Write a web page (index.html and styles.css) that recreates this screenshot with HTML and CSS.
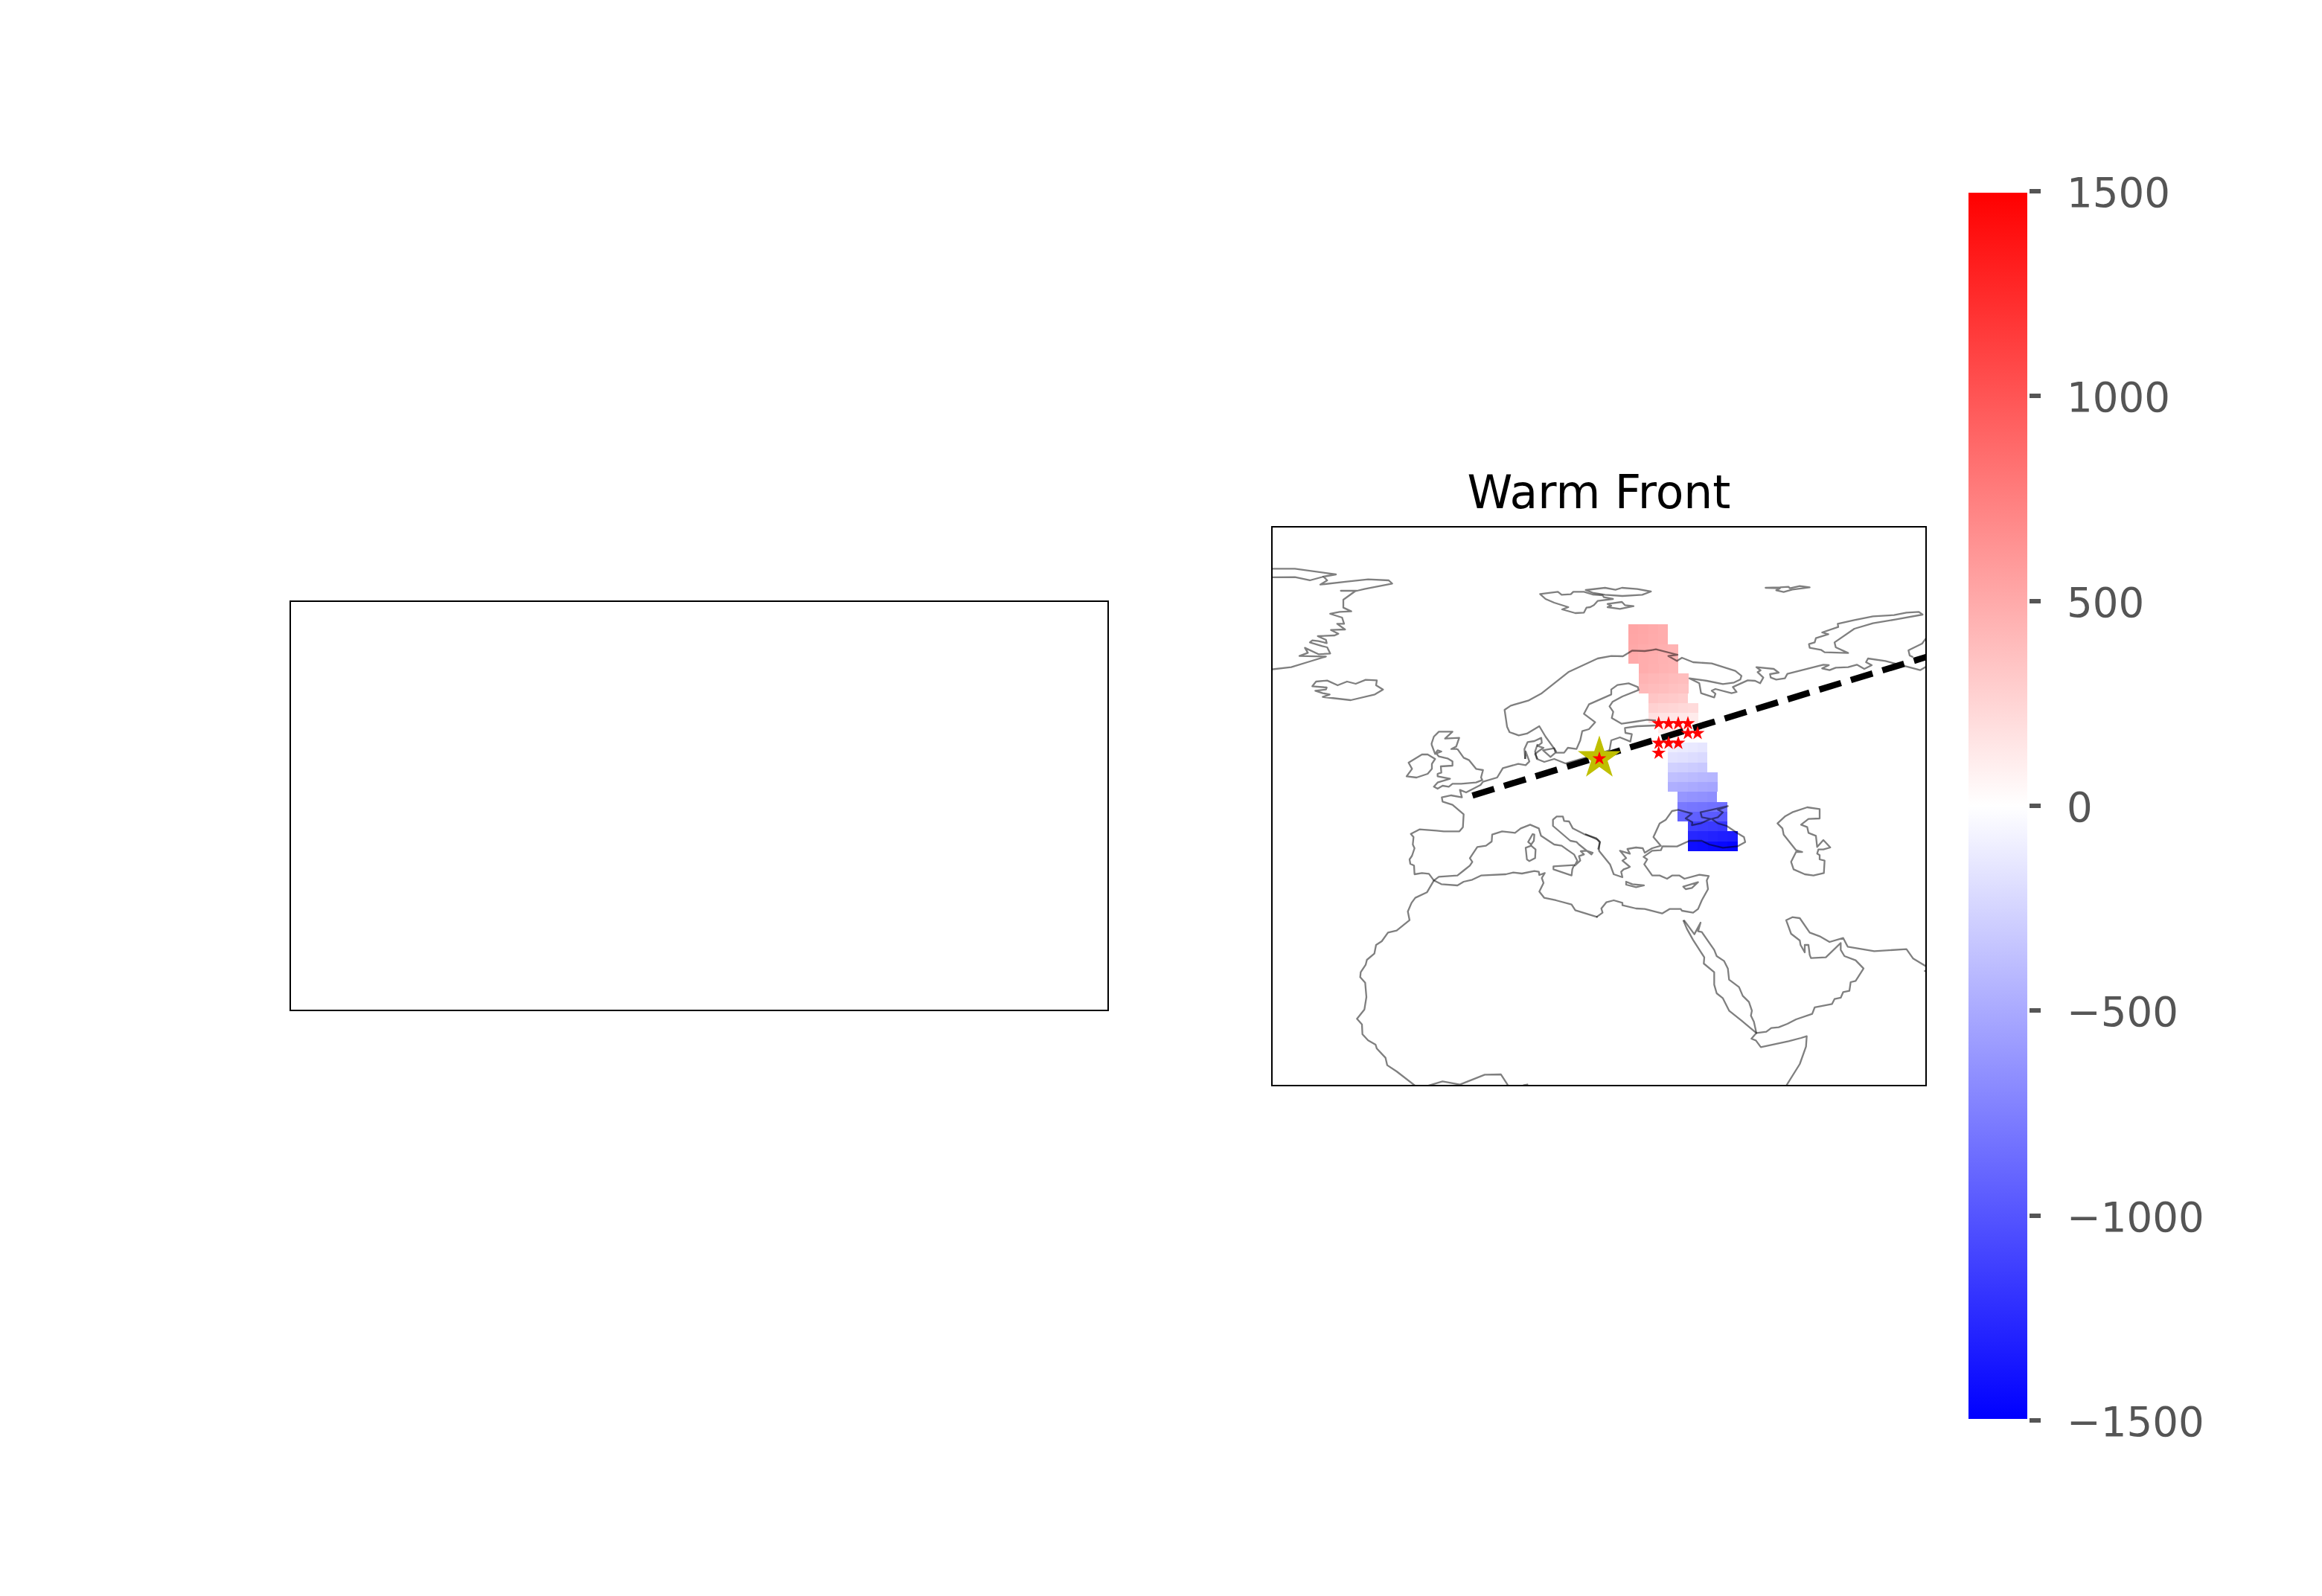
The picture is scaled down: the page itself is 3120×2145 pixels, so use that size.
FILE: index.html
```html
<!DOCTYPE html>
<html lang="en">
<head>
    <meta charset="UTF-8" />
    <title>Warm Front</title>
    <link rel="stylesheet" href="styles.css">
</head>
<body>

<div class="figure">
    <div class="empty-axes"></div>

    <div class="map-panel">
        <h2 class="map-title">Warm Front</h2>
        <div class="map-axes">
            <!-- viewBox is in page pixels, each coast group has its own scale -->
            <svg class="map" viewBox="1710 709 877 749" width="877" height="749">
                <defs>
                    <polygon id="star" points="0,-1 .2245,-.309 .951,-.309 .363,.118 .588,.809 0,.382 -.588,.809 -.363,.118 -.951,-.309 -.2245,-.309" />
                </defs>

                <g id="mesh"></g>

                <line class="front-line" x1="1978.5" y1="1069.2" x2="2590" y2="882.5" />

                <g transform="translate(1700 620) scale(.33333)">
                    <!-- greenland -->
                    <path class="coast" d="M0,433 L120,433 L285,456 L235,465 L250,480 L222,497 L330,485 L415,476 L498,480 L512,493 L400,515 L370,522 L305,522 L365,522 L315,558 L315,590 L347,605 L300,607 L262,615 L310,630 L318,655 L290,655 L322,678 L265,680 L295,695 L280,702 L212,705 L245,720 L248,733 L215,725 L190,722 L180,730 L230,745 L250,750 L262,775 L215,778 L160,752 L172,772 L138,785 L245,787 L170,810 L105,830 L0,842" />
                    <path class="coast" d="M0,468 L120,467 L180,480 L235,465" />
                    <!-- iceland -->
                    <path class="coast" d="M190,907 L205,888 L250,884 L292,903 L330,888 L365,897 L405,881 L450,883 L447,903 L475,920 L442,940 L345,963 L232,950 L260,940 L232,935 L202,925 L245,920 L248,912 Z" />
                    <!-- svalbard -->
                    <path class="coast" d="M1108,535 L1180,526 L1195,538 L1232,536 L1242,526 L1285,526 L1320,537 L1360,540 L1365,548 L1402,555 L1340,563 L1325,580 L1310,588 L1295,590 L1285,610 L1250,612 L1197,597 L1222,588 L1165,570 L1130,555 Z" />
                    <path class="coast" d="M1292,519 L1370,510 L1412,518 L1438,510 L1500,515 L1555,525 L1520,538 L1440,543 L1370,538 L1320,530 Z" />
                    <path class="coast" d="M1380,575 L1438,567 L1450,580 L1485,584 L1430,595 L1380,588 L1395,582 Z" />
                    <!-- scandinavia -->
                    <path class="coast" d="M1560,761 L1530,765 L1480,763 L1442,786 L1395,785 L1340,795 L1222,850 L1115,935 L1060,965 L990,985 L965,1002 L975,1070 L985,1092 L1022,1105 L1055,1098 L1105,1068 L1130,1110 L1170,1165 L1175,1175 L1205,1175 L1220,1155 L1255,1160 L1270,1125 L1278,1088 L1305,1080 L1330,1052 L1285,1018 L1305,980 L1395,940 L1395,920 L1420,902 L1465,895 L1502,910 L1505,922 L1440,948 L1400,970 L1388,988 L1403,1010 L1397,1035 L1437,1058 L1490,1050 L1540,1042 L1575,1045" />
                    <path class="coast" d="M1575,1065 L1500,1068 L1450,1075 L1452,1095 L1478,1100 L1472,1130 L1430,1113 L1395,1125 L1388,1165" />
                    <!-- denmark, scotland top -->
                    <path class="coast" d="M1048,1200 L1045,1160 L1058,1132 L1085,1128 L1113,1115 L1115,1135 L1098,1148 L1122,1155 L1100,1170 L1088,1180 L1098,1200" />
                    <path class="coast" d="M1120,1165 L1165,1157 L1170,1175 L1150,1192 Z" />
                    <path class="coast" d="M670,1140 L680,1110 L700,1090 L755,1090 L725,1118 L782,1115 L770,1150 L750,1160 L775,1160" />
                </g>

                <g transform="translate(2100 700) scale(.33333)">
                    <!-- russian arctic coast -->
                    <path class="coast" d="M360,521 L375,518 L462,540 L425,545 L460,565 L480,552 L525,570 L600,575 L695,605 L720,625 L715,640 L690,652 L645,658 L580,645 L510,635 L550,655 L557,695 L610,712 L615,697 L600,685 L615,678 L680,695 L700,690 L685,670 L745,643 L775,645 L795,655 L808,632 L785,610 L797,603 L780,590 L850,597 L870,612 L835,618 L838,632 L860,640 L895,635 L905,617 L1050,580 L1072,582 L1045,595 L1075,602 L1100,592 L1150,590 L1185,580 L1215,597 L1245,582 L1222,570 L1230,555 L1300,565 L1395,590 L1440,602 L1470,585" />
                    <path class="coast" d="M1470,465 L1448,495 L1393,522 L1398,543 L1412,550" />
                    <!-- novaya zemlya -->
                    <path class="coast" d="M1450,378 L1435,367 L1385,370 L1335,380 L1250,385 L1175,400 L1108,415 L1110,428 L1045,450 L1070,457 L1020,473 L1015,490 L992,497 L995,512 L1040,520 L1055,530 L1150,533 L1100,510 L1095,490 L1175,435 L1250,413 L1340,398 Z" />
                    <!-- franz josef land -->
                    <path class="coast" d="M817,270 L875,268 L910,266 L915,272 L955,263 L995,268 L925,277 L890,287 L860,280 L875,272 Z" />
                </g>

                <g transform="translate(1700 1000) scale(.33333)">
                    <!-- north sea, france, iberia, med north shore -->
                    <path class="coast" d="M1048,60 L1050,30 L1065,70 L1050,85 L1020,80 L958,97 L935,135 L878,152 L868,165 L810,195 L785,185 L793,215 L750,207 L712,215 L715,232 L755,245 L800,283 L797,335 L783,352 L720,352 L690,349 L622,344 L587,362 L598,375 L595,405 L602,420 L592,450 L582,465 L585,483 L600,490 L602,525 L632,520 L660,523 L680,550 L700,535 L775,530 L800,510 L825,490 L835,475 L825,460 L855,415 L890,410 L913,393 L915,365 L955,352 L1007,358 L1030,340 L1068,325 L1103,340 L1112,370 L1165,405 L1195,410 L1220,428 L1245,445 L1258,470 L1248,490 L1270,470 L1265,452 L1285,445 L1272,432 L1295,430 L1320,438 L1315,445 L1265,405 L1255,395 L1230,390 L1195,360 L1160,330 L1160,305 L1175,292 L1200,292 L1205,310 L1225,312 L1240,340 L1290,365 L1335,380 L1348,395 L1345,430" />
                    <path class="coast" d="M1098,0 L1088,30 L1095,60 L1125,72 L1165,60 L1210,78 L1290,55 L1388,25" />
                    <!-- britain, ireland -->
                    <path class="coast" d="M775,20 L800,55 L822,65 L850,100 L878,105 L870,135 L875,145 L850,155 L790,160 L755,160 L740,172 L715,168 L695,180 L680,172 L695,155 L745,140 L695,130 L695,120 L710,115 L708,90 L755,87 L755,70 L735,58 L700,50 L690,38 L710,30 L695,25 L685,40 L670,0" />
                    <path class="coast" d="M578,75 L632,42 L655,42 L685,60 L672,80 L672,100 L655,120 L610,135 L570,130 L592,100 Z" />
                    <!-- sicily, corsica, sardinia -->
                    <path class="coast" d="M1162,493 L1245,488 L1238,505 L1235,530 L1162,505 Z" />
                    <path class="coast" d="M1060,395 L1078,363 L1085,365 L1083,390 L1072,405 Z" />
                    <path class="coast" d="M1072,410 L1090,425 L1088,460 L1065,472 L1055,465 L1050,418 Z" />
                    <!-- africa -->
                    <path class="coast" d="M1340,698 L1250,670 L1235,647 L1172,630 L1125,620 L1105,595 L1122,560 L1115,540 L1127,520 L1105,528 L1103,515 L1085,512 L1035,522 L1000,518 L970,525 L870,530 L835,547 L800,555 L775,570 L710,565 L680,550 L652,598 L605,620 L590,640 L575,675 L582,710 L530,752 L495,760 L470,795 L447,810 L440,845 L410,870 L405,890 L385,920 L383,940 L403,962 L408,1020 L400,1070 L370,1108 L390,1130 L392,1170 L415,1195 L445,1212 L450,1228 L485,1265 L492,1295 L530,1320 L605,1378" />
                    <path class="coast" d="M655,1378 L715,1360 L785,1373 L885,1333 L950,1332 L980,1378" />
                    <path class="coast" d="M1040,1376 L1060,1372" />
                </g>

                <g transform="translate(2130 1060) scale(.33333)">
                    <!-- balkans, black sea, turkey, levant, libya -->
                    <path class="coast" d="M55,250 L100,305 L115,345 L150,357 L145,335 L155,325 L170,320 L180,315 L150,290 L165,280 L140,250 L180,262 L170,243 L205,237 L232,240 L240,258 L270,240 L305,230 L275,195 L300,140 L325,125 L350,90 L375,85 L430,100 L405,120 L432,135 L430,147 L465,140 L505,122 L470,115 L465,95 L510,85 L575,70 L535,85 L555,95 L535,115 L510,122 L535,140 L570,150 L615,180 L640,195 L645,215 L615,232 L555,238 L500,225 L470,210 L420,210 L370,233 L312,232 L305,248 L270,250 L235,275 L250,285 L238,305 L270,350 L300,350 L330,363 L350,350 L380,350 L400,363 L460,347 L498,352 L490,370 L495,405 L470,450 L455,485 L435,500 L390,492 L385,485 L340,485 L310,503 L240,485 L205,483 L150,470 L150,460 L115,450 L85,458 L65,483 L70,500 L45,518" />
                    <path class="coast" d="M0,183 L50,205 L60,215 L52,245" />
                    <!-- crete, cyprus -->
                    <path class="coast" d="M165,375 L190,385 L237,390 L205,397 L165,387 Z" />
                    <path class="coast" d="M395,395 L455,377 L430,400 L405,405 Z" />
                    <!-- caspian -->
                    <path class="coast" d="M775,140 L805,112 L835,95 L895,75 L945,82 L945,120 L900,122 L870,145 L895,155 L900,178 L930,190 L935,235 L960,207 L988,237 L960,245 L940,245 L935,262 L945,268 L945,285 L965,290 L962,340 L920,350 L885,345 L840,325 L830,295 L850,255 L875,255 L850,248 L800,185 L795,160 Z" />
                    <!-- red sea, arabia, iran coast -->
                    <path class="coast" d="M395,530 L410,565 L435,610 L480,680 L478,705 L520,740 L520,790 L530,825 L555,845 L580,895 L630,935 L690,985 L670,1008 L688,1015 L708,1042 L820,1018 L870,1005 L893,998 L890,1040 L865,1110 L812,1195" />
                    <path class="coast" d="M398,530 L440,587 L465,540 L455,575 L470,578 L520,650 L530,675 L560,695 L575,725 L580,770 L620,800 L635,835 L660,860 L672,895 L668,915 L680,940 L690,985 L730,980 L750,965 L780,962 L815,948 L850,930 L915,908 L925,882 L995,868 L1005,848 L1030,843 L1040,820 L1065,815 L1070,780 L1090,775 L1122,725 L1090,692 L1045,675 L1030,650 L1030,622 L970,680 L910,683 L905,670 L900,630 L885,630 L885,660 L868,630 L865,612 L830,585 L810,530 L835,518 L865,522 L905,580 L945,595 L985,618 L1040,602 L1058,637 L1165,655 L1295,647 L1322,685 L1375,717" />
                    <path class="coast" d="M1366,735 L1375,735" />
                </g>

                <use href="#star" class="star-big" transform="translate(2149 1019) scale(30.5)" />
                <use href="#star" class="star-small" transform="translate(2149 1019.5) scale(9.8)" />

                <use href="#star" class="star-small" transform="translate(2228.7 972.3) scale(10)" />
                <use href="#star" class="star-small" transform="translate(2242 972.3) scale(10)" />
                <use href="#star" class="star-small" transform="translate(2255 972.3) scale(10)" />
                <use href="#star" class="star-small" transform="translate(2268 972.3) scale(10)" />
                <use href="#star" class="star-small" transform="translate(2268 985.5) scale(10)" />
                <use href="#star" class="star-small" transform="translate(2281 985.5) scale(10)" />
                <use href="#star" class="star-small" transform="translate(2228.7 998.7) scale(10)" />
                <use href="#star" class="star-small" transform="translate(2242 998.7) scale(10)" />
                <use href="#star" class="star-small" transform="translate(2255 998.7) scale(10)" />
                <use href="#star" class="star-small" transform="translate(2228.7 1012) scale(10)" />
            </svg>
        </div>
    </div>

    <div class="colorbar">
        <div class="colorbar-ramp"></div>
        <div class="colorbar-ticks">
            <div class="tick"><span class="tick-mark"></span><span class="tick-label">1500</span></div>
            <div class="tick"><span class="tick-mark"></span><span class="tick-label">1000</span></div>
            <div class="tick"><span class="tick-mark"></span><span class="tick-label">500</span></div>
            <div class="tick"><span class="tick-mark"></span><span class="tick-label">0</span></div>
            <div class="tick"><span class="tick-mark"></span><span class="tick-label">−500</span></div>
            <div class="tick"><span class="tick-mark"></span><span class="tick-label">−1000</span></div>
            <div class="tick"><span class="tick-mark"></span><span class="tick-label">−1500</span></div>
        </div>
    </div>
</div>

<script src="mesh.js"></script>
</body>
</html>
```

FILE: styles.css
```css
body {
    margin: 0;
    background: #ffffff;
    font-family: "DejaVu Sans", sans-serif;
}
.figure {
    display: flex;
    align-items: flex-start;
    box-sizing: border-box;
    width: 3120px;
    height: 2145px;
    padding-left: 389px;
    overflow: hidden;
}
.empty-axes {
    box-sizing: border-box;
    width: 1101px;
    height: 552px;
    margin-top: 807px;
    border: 2px solid #000;
}
.map-panel {
    margin-top: 632px;
    margin-left: 218px;
}
.map-title {
    margin: 0 0 15px;
    font-size: 61.5px;
    font-weight: normal;
    line-height: 60px;
    text-align: center;
    color: #000;
}
.map-axes {
    width: 877px;
    height: 749px;
    border: 2px solid #000;
}
.map {
    display: block;
}
.coast {
    fill: none;
    stroke: rgba(0, 0, 0, 0.5);
    stroke-width: 6.9;
    stroke-linejoin: round;
}
.front-line {
    stroke: #000;
    stroke-width: 8.5;
    stroke-dasharray: 30.5 13.8;
}
.star-big {
    fill: #bfbf00;
}
.star-small {
    fill: #ff0000;
}
.colorbar {
    display: flex;
    margin-top: 259px;
    margin-left: 56px;
}
.colorbar-ramp {
    width: 79px;
    height: 1648px;
    background: linear-gradient(#ff0000, #ffffff, #0000ff);
}
.colorbar-ticks {
    display: flex;
    flex-direction: column;
    justify-content: space-between;
    height: 1652px;
    margin-top: -2px;
    margin-left: 3px;
}
.tick {
    display: flex;
    align-items: center;
    height: 0;
    color: #555555;
    font-size: 54.6px;
}
.tick-mark {
    width: 15px;
    height: 6px;
    background: #555555;
}
.tick-label {
    margin-top: 4px;
    margin-left: 35px;
    line-height: 60px;
}
```

FILE: mesh.js
```js
// grid of the temperature mesh, rows go north to south
// [first column, number of cells, value of the first cell]
const rows = [
    [0, 4, 530], [0, 4, 525], [0, 5, 510], [0, 5, 500],
    [1, 4, 480], [1, 5, 440], [1, 5, 410],
    [2, 4, 340], [2, 5, 270], [2, 5, 180],
    [3, 4, 110], [3, 4, 35],
    [4, 4, -100], [4, 4, -170], [4, 4, -270], [4, 5, -370], [4, 5, -470],
    [5, 4, -620], [5, 5, -790], [5, 5, -920],
    [6, 4, -1130], [6, 5, -1270], [6, 5, -1410]
];
const startX = [2188, 2202, 2215, 2228, 2241, 2254, 2268];
const cellW = 13.3;
const cellH = 13.25;

function bwr(value) {
    const t = Math.max(-1, Math.min(1, value / 1500));
    if (t > 0) {
        const c = Math.round(255 * (1 - t));
        return `rgb(255,${c},${c})`;
    }
    const c = Math.round(255 * (1 + t));
    return `rgb(${c},${c},255)`;
}

const mesh = document.getElementById('mesh');
rows.forEach((row, r) => {
    for (let i = 0; i < row[1]; i++) {
        const rect = document.createElementNS('http://www.w3.org/2000/svg', 'rect');
        rect.setAttribute('x', startX[row[0]] + i * cellW);
        rect.setAttribute('y', 839 + r * cellH);
        rect.setAttribute('width', cellW);
        rect.setAttribute('height', cellH);
        rect.setAttribute('shape-rendering', 'crispEdges');
        rect.setAttribute('fill', bwr(row[2] - i * 15));
        mesh.appendChild(rect);
    }
});
```
